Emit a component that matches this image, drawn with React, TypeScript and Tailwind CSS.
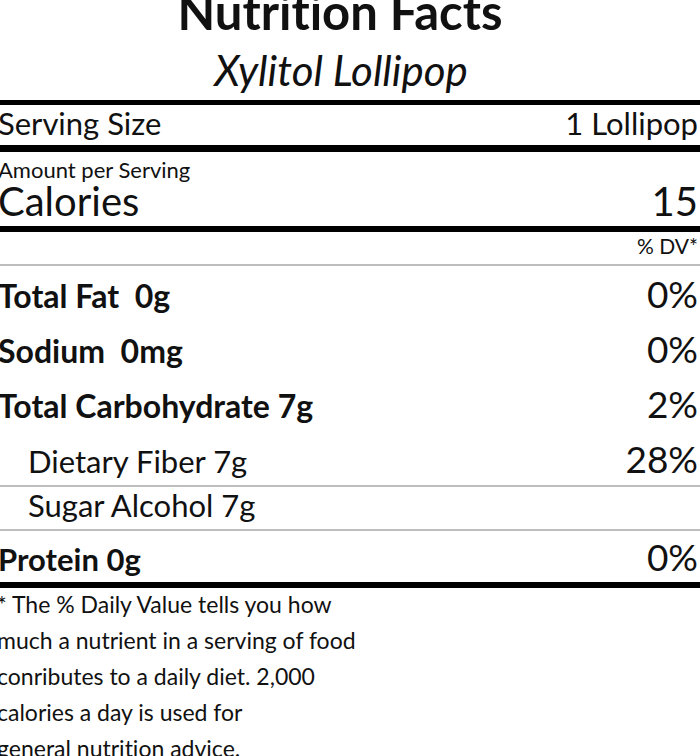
const nutrients = [
  { label: 'Total Fat\u00a0\u00a00g', pct: '0%', bold: true },
  { label: 'Sodium\u00a0\u00a00mg', pct: '0%', bold: true },
  { label: 'Total Carbohydrate 7g', pct: '2%', bold: true },
];

const footnote = [
  '* The % Daily Value tells you how',
  'much a nutrient in a serving of food',
  'conributes to a daily diet. 2,000',
  'calories a day is used for',
  'general nutrition advice.',
];

export default function App() {
  return (
    <div className="h-[756px] w-[700px] overflow-hidden bg-white text-[#111] font-['Lato','Open_Sans',sans-serif] [font-variant-ligatures:none]">
      <h1 className="-mt-[13px] pr-[20px] text-center text-[49px] font-bold leading-[49px]">Nutrition Facts</h1>
      <h2 className="pt-[5px] pr-[18px] text-center text-[42px] italic leading-[59px]">Xylitol Lollipop</h2>

      <div className="h-[5px] bg-black" />
      <div className="-ml-[2px] flex h-[40px] justify-between pr-[2px] text-[31px] leading-[36px]">
        <span>Serving Size</span>
        <span>1 Lollipop</span>
      </div>
      <div className="h-[7px] bg-black" />

      <div className="-ml-[2px] pr-[2px]">
        <div className="text-[22px] leading-[36px]">Amount per Serving</div>
        <div className="flex h-[38px] items-baseline justify-between text-[40px] leading-[26px]">
          <span>Calories</span>
          <span>15</span>
        </div>
      </div>
      <div className="h-[6px] bg-black" />

      <div className="-ml-[2px] h-[32px] pr-[2px] text-right text-[21px] leading-[27px]">% DV*</div>
      <div className="h-[2px] bg-[#bdbdbd]" />

      {nutrients.map((n) => (
        <div key={n.label} className="-ml-[2px] flex h-[55px] items-baseline justify-between pr-[2px] leading-[55px]">
          <span className="text-[32px] font-bold">{n.label}</span>
          <span className="text-[37px]">{n.pct}</span>
        </div>
      ))}
      <div className="-ml-[2px] flex h-[54px] items-baseline justify-between pr-[2px] leading-[55px]">
        <span className="pl-[30px] text-[31px]">Dietary Fiber 7g</span>
        <span className="text-[37px]">28%</span>
      </div>
      <div className="h-[2px] bg-[#bdbdbd]" />
      <div className="-ml-[2px] h-[42px] pl-[30px] pr-[2px] text-[31px] leading-[36px]">Sugar Alcohol 7g</div>
      <div className="h-[2px] bg-[#bdbdbd]" />
      <div className="-ml-[2px] flex h-[51px] items-baseline justify-between pr-[2px] leading-[51px]">
        <span className="text-[31px] font-bold">Protein 0g</span>
        <span className="text-[37px]">0%</span>
      </div>
      <div className="h-[6px] bg-black" />

      <div className="-ml-[3px] -mt-[2px] text-[23px] leading-[36px]">
        {footnote.map((line) => (
          <div key={line}>{line}</div>
        ))}
      </div>
    </div>
  );
}
